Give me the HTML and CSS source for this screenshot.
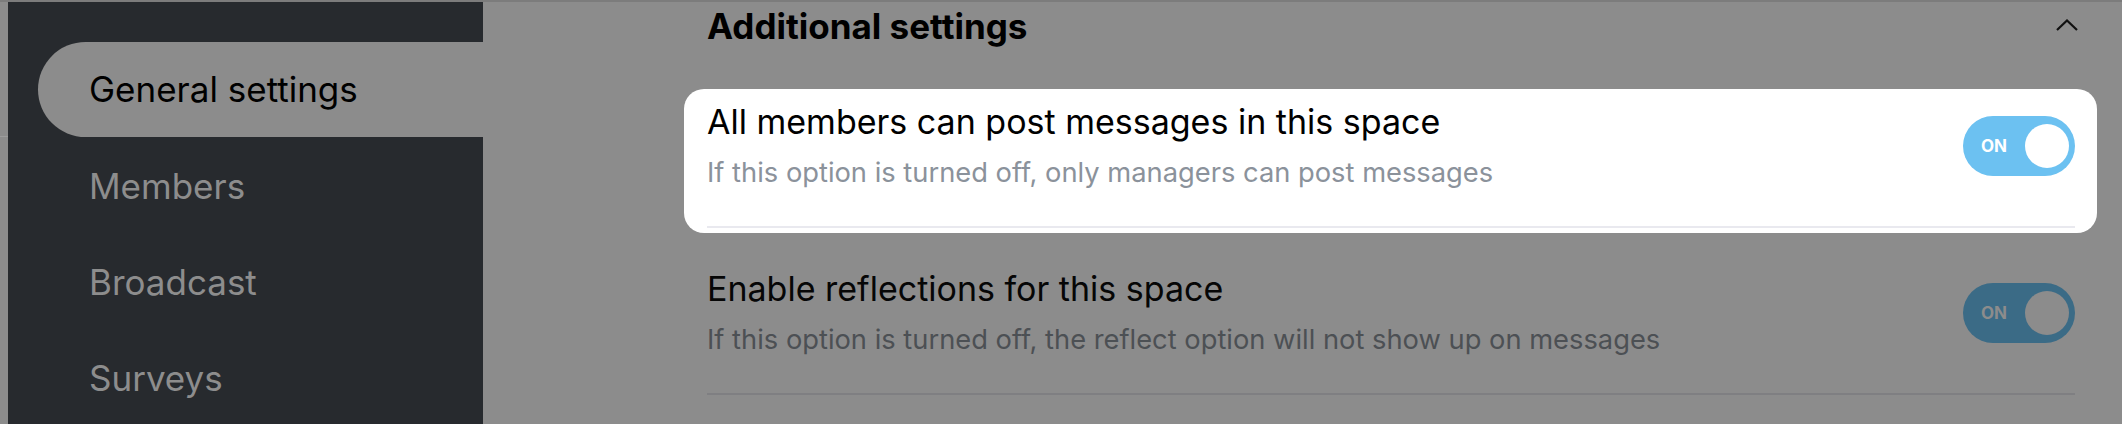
FILE: index.html
```html
<!DOCTYPE html>
<html lang="en">

<head>
    <meta charset="UTF-8">
    <meta name="viewport" content="width=device-width, initial-scale=1.0">
    <title>Space settings</title>
    <link rel="stylesheet" href="styles.css">
</head>

<body>
    <div id="page">
        <div id="gutter">
            <div class="gutter-head"></div>
        </div>

        <ul id="menu">
            <li class="menu-selected">General settings</li>
            <li>Members</li>
            <li>Broadcast</li>
            <li>Surveys</li>
        </ul>

        <div id="main">
            <div class="section-head">
                <h2>Additional settings</h2>
                <svg class="chevron" width="22" height="12" viewBox="0 0 22 12">
                    <polyline points="1,11 11,1.5 21,11" fill="none" stroke="#111" stroke-width="2.2" />
                </svg>
            </div>

            <!-- highlighted option -->
            <div class="spot">
                <div class="option">
                    <div class="option-text">
                        <div class="option-title">All members can post messages in this space</div>
                        <div class="option-desc">If this option is turned off, only managers can post messages</div>
                    </div>
                    <span class="toggle">ON<i></i></span>
                </div>
            </div>

            <div class="option dim">
                <div class="option-text">
                    <div class="option-title">Enable reflections for this space</div>
                    <div class="option-desc">If this option is turned off, the reflect option will not show up on messages</div>
                </div>
                <span class="toggle">ON<i></i></span>
            </div>
        </div>
    </div>
</body>

</html>
```

FILE: styles.css
```css
* {
    margin: 0;
    padding: 0;
}

body {
    background: #8c8c8c;
    border-top: 2px solid #7c7c7c;
    font-family: Inter, "Noto Sans", sans-serif;
    height: 422px;
    overflow: hidden;
}

#page {
    display: flex;
    height: 100%;
}

#gutter {
    width: 8px;
}

#gutter .gutter-head {
    height: 134px;
    border-bottom: 1px solid #9c9c9c;
}

#menu {
    width: 475px;
    background: #272a2e;
    padding-top: 40px;
}

#menu li {
    list-style: none;
    height: 96px;
    line-height: 96px;
    margin-left: 30px;
    padding-left: 51px;
    font-size: 35px;
    color: #8d8d8d;
}

#menu .menu-selected {
    height: 95px;
    line-height: 95px;
    margin-bottom: 1px;
    background: #8c8c8c;
    color: #000;
    border-radius: 48px 0 0 48px;
}

#main {
    flex: 1;
    padding: 0 25px 0 201px;
}

.section-head {
    display: flex;
    justify-content: space-between;
    padding: 6px 19px 0 23px;
}

.section-head h2 {
    font-size: 35px;
    line-height: 36px;
    font-weight: 700;
    color: #000;
}

.chevron {
    margin-top: 11px;
}

.spot {
    margin-top: 45px;
    background: #fff;
    border-radius: 20px;
    padding: 13px 22px 5px 23px;
}

.option {
    display: flex;
    align-items: center;
    justify-content: space-between;
    padding-bottom: 37px;
    border-bottom: 2px solid #e9e9ef;
}

.option-title {
    font-size: 34px;
    line-height: 40px;
    color: #000;
}

.option-desc {
    margin-top: 15px;
    font-size: 27.3px;
    line-height: 32px;
    color: #8b929b;
}

.toggle {
    display: flex;
    align-items: center;
    justify-content: space-between;
    width: 112px;
    height: 60px;
    box-sizing: border-box;
    padding: 0 6px 0 18px;
    border-radius: 30px;
    background: #6cc1f1;
    color: #fff;
    font-size: 17px;
    font-weight: 700;
}

.toggle i {
    width: 44px;
    height: 44px;
    border-radius: 50%;
    background: #fff;
}

/* the rest of the page sits under the overlay */
.dim {
    margin: 36px 22px 0 23px;
    border-bottom-color: #7f7f82;
}

.dim .option-title {
    color: #060606;
}

.dim .option-desc {
    color: #4c5054;
}

.dim .toggle {
    background: #3b6b86;
    color: #8c8c8c;
}

.dim .toggle i {
    background: #8c8c8c;
}
```
